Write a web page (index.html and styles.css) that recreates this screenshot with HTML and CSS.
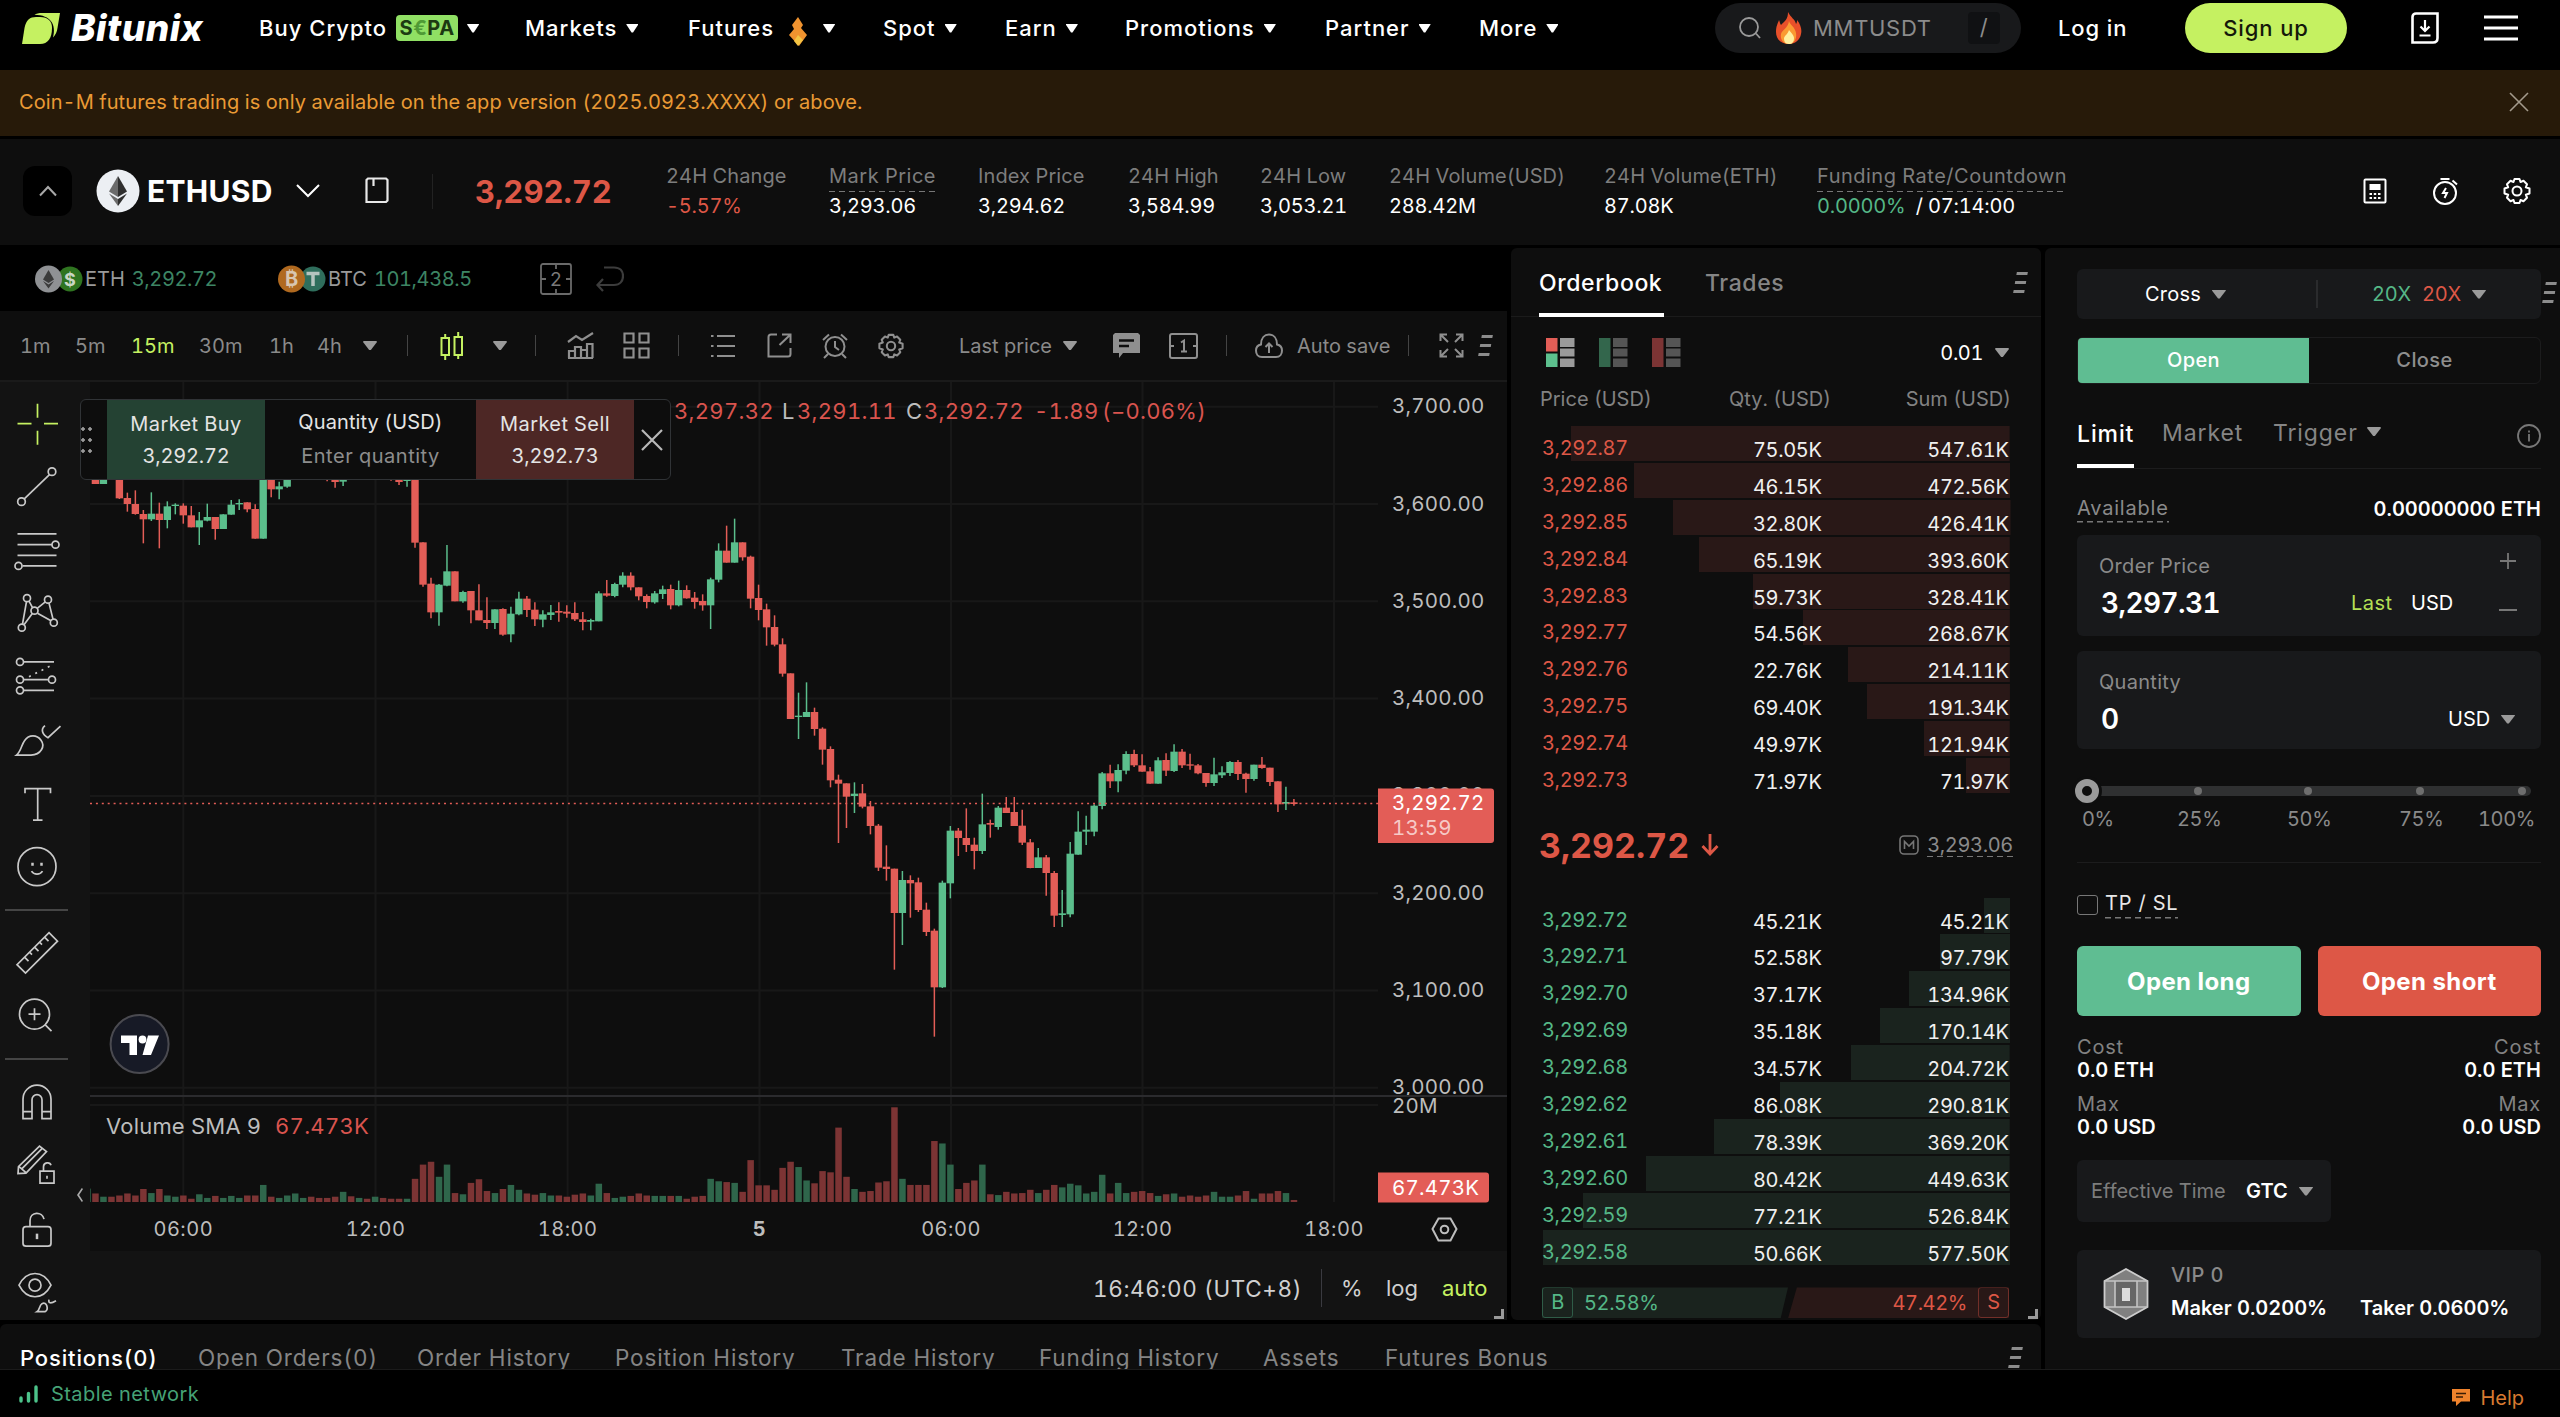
FILE: index.html
```html
<!DOCTYPE html>
<html lang="en">
<head>
    <meta charset="UTF-8">
    <meta name="viewport" content="width=device-width, initial-scale=1.0">
    <title>ETHUSD | Bitunix Futures</title>
    <link rel="stylesheet" href="styles.css">
</head>
<body>
    <header class="topbar">
        <a class="logo" href="#">
            <svg width="38" height="31" viewBox="0 0 38 31"><path d="M12.500 1.800C14 0.500 17 0 20 0H38L35.500 15C35 19 33.500 22 31 24.500C34.500 12 29 2 12.500 1.800Z" fill="#c5f161"/><path d="M0 31L2.500 15C4 7 8 4 14 4H18C26 4 30 8 30 15C30 25 26 31 18 31Z" fill="#c5f161"/></svg>
            <span>Bitunix</span>
        </a>
        <nav class="nav">
            <a>Buy Crypto <b class="sepa">S<i>€</i>PA</b><i class="caret"></i></a>
            <a>Markets<i class="caret"></i></a>
            <a>Futures<svg class="nav-flame" width="20" height="36" viewBox="0 0 20 36"><path d="M10 7L15 15L13 18L19 25L11 36L1 25L6 19L4 15Z" fill="#f0932f"/><path d="M10 25L15 30L10 36L6 31Z" fill="#f5c544"/></svg><i class="caret"></i></a>
            <a>Spot<i class="caret"></i></a>
            <a>Earn<i class="caret"></i></a>
            <a>Promotions<i class="caret"></i></a>
            <a>Partner<i class="caret"></i></a>
            <a>More<i class="caret"></i></a>
        </nav>
        <div class="search">
            <svg width="24" height="24" viewBox="0 0 24 24" fill="none" stroke="#9a9a9a" stroke-width="1.8"><circle cx="11" cy="11" r="9"/><path d="M18 17.500L22 22"/></svg>
            <svg class="search-flame" width="26" height="32" viewBox="0 0 26 32"><path d="M12 0C15 6 19 7 20 12C21 11 21 9 21 8C25 13 26 18 25 22C24 28 19 32 13 32C6 32 0 28 0 20C0 14 2 11 3 8C4 10 4 12 5 13C9 9 12 7 12 0Z" fill="#e8502a"/><path d="M13 9C14 13 19 15 20 21C21 27 18 32 13 32C7 32 4 27 5 22C6 18 12 16 13 9Z" fill="#fa9a32"/><path d="M13 18C15 21 18 23 18 26C18 30 16 32 13 32C9 32 8 29 8 26C9 23 12 22 13 18Z" fill="#fff0a0"/></svg>
            <span>MMTUSDT</span>
            <kbd>/</kbd>
        </div>
        <a class="login">Log in</a>
        <button class="signup">Sign up</button>
        <svg class="device" width="28" height="32" viewBox="0 0 28 32" fill="none" stroke="#fff" stroke-width="2.600"><path d="M5 1.500H26.500V26C26.500 29 25 30.500 22 30.500H1.500V5C1.500 3 3 1.500 5 1.500Z"/><path d="M14 8V18M9.500 14.500L14 19L18.500 14.500M8.500 23.500H19.500" stroke-width="2.200"/></svg>
        <svg class="burger" width="34" height="26" viewBox="0 0 34 26" stroke="#fff" stroke-width="3"><path d="M0 2H34M0 13H34M0 24H34"/></svg>
    </header>

    <div class="notice">
        <span>Coin-M futures trading is only available on the app version (2025.0923.XXXX) or above.</span>
        <svg width="20" height="20" viewBox="0 0 20 20" stroke="#a39a8c" stroke-width="1.600"><path d="M1 1L19 19M19 1L1 19"/></svg>
    </div>

    <section class="ticker">
        <button class="collapse"><svg width="18" height="12" viewBox="0 0 18 12" fill="none" stroke="#a8a8a8" stroke-width="2"><path d="M1 10.500L9 2L17 10.500"/></svg></button>
        <svg class="eth" width="44" height="44" viewBox="0 0 44 44"><circle cx="22" cy="22" r="21.500" fill="#eceff3"/><path d="M22 7L13 22.500L22 28Z" fill="#6b6b6b"/><path d="M22 7L31 22.500L22 28Z" fill="#2f2f2f"/><path d="M13 24.500L22 30V37Z" fill="#6b6b6b"/><path d="M31 24.500L22 30V37Z" fill="#2f2f2f"/></svg>
        <h1>ETHUSD</h1>
        <svg class="chev" width="24" height="14" viewBox="0 0 24 14" fill="none" stroke="#fff" stroke-width="2"><path d="M1 1L12 12L23 1"/></svg>
        <svg class="book" width="24" height="27" viewBox="0 0 24 27" fill="none" stroke="#e8e8e8" stroke-width="2.200"><path d="M3 1.500H21L22.500 3V23.500L21 25H1.500V3Z"/><path d="M8.500 1.500V9"/></svg>
        <span class="ticker-line"></span>
        <strong class="last">3,292.72</strong>
        <dl class="stats">
            <div><dt>24H Change</dt><dd class="down">-5.57%</dd></div>
            <div><dt class="dashed">Mark Price</dt><dd>3,293.06</dd></div>
            <div><dt>Index Price</dt><dd>3,294.62</dd></div>
            <div><dt>24H High</dt><dd>3,584.99</dd></div>
            <div><dt>24H Low</dt><dd>3,053.21</dd></div>
            <div><dt>24H Volume(USD)</dt><dd>288.42M</dd></div>
            <div><dt>24H Volume(ETH)</dt><dd>87.08K</dd></div>
            <div><dt class="dashed">Funding Rate/Countdown</dt><dd><span class="up">0.0000%</span> &nbsp;/ 07:14:00</dd></div>
        </dl>
        <div class="ticker-tools">
            <svg width="24" height="26" viewBox="0 0 24 26" fill="none" stroke="#fff" stroke-width="2"><rect x="1.500" y="1.500" width="21" height="23" rx="1"/><rect x="7.500" y="7" width="9" height="4" fill="#fff"/><path d="M6.500 16H9M10.800 16H13.200M15 16H17.500M6.500 20H9M10.800 20H13.200M15 20H17.500"/></svg>
            <svg width="26" height="28" viewBox="0 0 26 28" fill="none" stroke="#fff" stroke-width="2"><circle cx="13" cy="16" r="11"/><path d="M8.500 2H17.500M20.500 3.500L25 7.500M14 11L11 16H15L12.500 21"/></svg>
            <svg width="28" height="28" viewBox="0 0 28 28" fill="none" stroke="#fff" stroke-width="2"><path d="M11.500 2H16.500L17.500 5L20.500 3.800L24 7.300L22.800 10.300L26.500 11.500V16.500L22.800 17.700L24 20.700L20.500 24.200L17.500 23L16.500 26H11.500L10.500 23L7.500 24.200L4 20.700L5.200 17.700L1.500 16.500V11.500L5.200 10.300L4 7.300L7.500 3.800L10.500 5Z" stroke-linejoin="round"/><circle cx="14" cy="14" r="4.500"/></svg>
        </div>
    </section>

    <main class="workspace">
        <div class="left">
            <div class="market">
                <div class="chart-col">
                    <div class="pairs">
                        <div class="pair">
                            <svg width="50" height="28" viewBox="0 0 50 28"><circle cx="35" cy="14" r="12.500" fill="#2f7420"/><text x="35" y="20.500" text-anchor="middle" font-size="18" font-weight="700" fill="#c9d6c5">$</text><circle cx="13.500" cy="14" r="13.500" fill="#8f9194"/><path d="M13.500 5L8 14.500L13.500 18L19 14.500Z" fill="#3b3b3b"/><path d="M8 16L13.500 19.500L19 16L13.500 23.500Z" fill="#3b3b3b"/></svg>
                            <span>ETH</span><em>3,292.72</em>
                        </div>
                        <div class="pair">
                            <svg width="50" height="28" viewBox="0 0 50 28"><circle cx="35" cy="14" r="12.500" fill="#2f6e5c"/><path d="M28.500 8.500H41.500M35 8V21" stroke="#b5c4bf" stroke-width="3.500"/><circle cx="13.500" cy="14" r="13.500" fill="#b0691f"/><text x="13.500" y="21" text-anchor="middle" font-size="20" font-weight="700" fill="#d8c6b0">₿</text></svg>
                            <span>BTC</span><em>101,438.5</em>
                        </div>
                        <svg class="split2" width="32" height="32" viewBox="0 0 32 32" fill="none" stroke="#6a6a6a" stroke-width="1.800"><rect x="1" y="1" width="30" height="30" rx="2"/><path d="M1 16H6M26 16H31M16 1V6M16 26V31"/><text x="16" y="23" text-anchor="middle" font-size="19" fill="#7a7a7a" stroke="none">2</text></svg>
                        <svg width="28" height="26" viewBox="0 0 28 26" fill="none" stroke="#3c3c3c" stroke-width="2.200"><path d="M8 1.500H18C24 1.500 27 5 27 10C27 15 24 19 18 19H2M7 13L1.500 19L7 25"/></svg>
                    </div>

                    <div class="chart-tools">
                        <span>1m</span><span>5m</span><span class="on">15m</span><span>30m</span><span>1h</span><span>4h</span>
                        <i class="caret"></i><i class="sep"></i>
                        <svg width="24" height="28" viewBox="0 0 24 28" fill="none" stroke="#c5f161" stroke-width="2"><rect x="1.500" y="6" width="7.500" height="17"/><rect x="14.500" y="5" width="7.500" height="18"/><path d="M5.200 2V6M5.200 23V28M18.200 0V5M18.200 23V27"/></svg>
                        <i class="caret"></i><i class="sep"></i>
                        <svg width="27" height="27" viewBox="0 0 27 27" fill="none" stroke="#8f8f8f" stroke-width="2.200"><path d="M1 10L9 4L15 8L26 1M2 26V19H8V26M8 26V15H14V26M14 26V18H20V26M20 26V12H25.500V26M1 26H26"/></svg>
                        <svg width="27" height="27" viewBox="0 0 27 27" fill="none" stroke="#8f8f8f" stroke-width="2.200"><path d="M1.500 1.500H10.500V10.500H1.500ZM16.500 1.500H25.500V10.500H16.500ZM1.500 16.500H10.500V25.500H1.500ZM16.500 16.500H25.500V25.500H16.500Z"/></svg>
                        <i class="sep"></i>
                        <svg width="24" height="24" viewBox="0 0 24 24" stroke="#8f8f8f" stroke-width="2.200"><path d="M0 2H2.500M6 2H24M0 12H2.500M6 12H24M0 22H2.500M6 22H24"/></svg>
                        <svg width="25" height="25" viewBox="0 0 25 25" fill="none" stroke="#8f8f8f" stroke-width="2"><path d="M10 1.500H4C2.500 1.500 1.500 2.500 1.500 4V23.500H21C22.500 23.500 23.500 22.500 23.500 21V15M15 1.500H23.500V10M23 2L12.500 12"/></svg>
                        <svg width="26" height="26" viewBox="0 0 26 26" fill="none" stroke="#8f8f8f" stroke-width="2"><circle cx="13" cy="13.500" r="9.500"/><path d="M13 8V14L17 17M1 7L7 1.500M25 7L19 1.500M6 21L2 25M20 21L24 25"/></svg>
                        <svg width="26" height="26" viewBox="0 0 28 28" fill="none" stroke="#8f8f8f" stroke-width="2.200"><path d="M11.500 2H16.500L17.500 5L20.500 3.800L24 7.300L22.800 10.300L26.500 11.500V16.500L22.800 17.700L24 20.700L20.500 24.200L17.500 23L16.500 26H11.500L10.500 23L7.500 24.200L4 20.700L5.200 17.700L1.500 16.500V11.500L5.200 10.300L4 7.300L7.500 3.800L10.500 5Z" stroke-linejoin="round"/><circle cx="14" cy="14" r="4.500"/></svg>
                        <span>Last price</span><i class="caret"></i>
                        <svg width="27" height="25" viewBox="0 0 27 25"><path d="M2 0H25L27 2V20H10L6 25V20H0V2Z" fill="#8f8f8f"/><path d="M6 7.500H21M6 13H16" stroke="#0e0e0e" stroke-width="2.400"/></svg>
                        <svg width="29" height="26" viewBox="0 0 29 26" fill="none" stroke="#8f8f8f" stroke-width="2"><rect x="1" y="1" width="27" height="24" rx="2"/><path d="M1 13H5M24 13H28M12 9.500L15 7.500V18.500M12 18.500H18"/></svg>
                        <i class="sep"></i>
                        <svg width="28" height="26" viewBox="0 0 28 26" fill="none" stroke="#8f8f8f" stroke-width="2"><path d="M7 24C3 24 1 21 1 17.500C1 14 3.500 12 6 11.500C6 5 9.500 1.500 14 1.500S22 5 22 11.500C24.500 12 27 14 27 17.500C27 21 25 24 21 24ZM14 20V11M10.500 14L14 10.500L17.500 14"/></svg>
                        <span>Auto save</span><i class="sep"></i>
                        <svg width="25" height="25" viewBox="0 0 25 25" fill="none" stroke="#8f8f8f" stroke-width="2"><path d="M1.500 8V1.500H8M17 1.500H23.500V8M1.500 17V23.500H8M23.500 17V23.500H17M2 2L9 9M23 2L16 9M2 23L9 16M23 23L16 16"/></svg>
                        <i class="grip"></i>
                    </div>

                    <div class="chart-body">
                        <aside class="draw-tools">
                            <svg class="active" viewBox="0 0 56 56"><path d="M8.500 28H22.500M35 28H49M28.500 8V22M28.500 35V49"/></svg>
                            <svg viewBox="0 0 56 56"><circle cx="43" cy="13" r="3.800"/><circle cx="12.500" cy="43" r="3.800"/><path d="M40.500 16L15 40.500"/></svg>
                            <svg viewBox="0 0 56 56"><path d="M8.500 11.300H47.500M8.500 22H43M8.500 32.700H47.500M13.500 43.300H47.500"/><circle cx="46.500" cy="22" r="3.500"/><circle cx="9.500" cy="43.300" r="3.500"/></svg>
                            <svg viewBox="0 0 56 56"><path d="M13.500 38.500L17.500 16M20 15.500L23.500 22M28.500 22.500L36 16.500M40 17.500L44 33.500M28.500 27.500L42 35M23.500 27.500L15 39"/><circle cx="18" cy="12.500" r="3.500"/><circle cx="39" cy="14" r="3.500"/><circle cx="25.500" cy="25" r="3.500"/><circle cx="12.800" cy="42" r="3.500"/><circle cx="44.800" cy="37" r="3.500"/></svg>
                            <svg viewBox="0 0 56 56"><path d="M14.500 13.300H45M14.500 31H39.500M14.500 41.700H45"/><path d="M20 28L43 16.500" stroke-dasharray="2 5"/><circle cx="11" cy="13.300" r="3.500"/><circle cx="11" cy="31" r="3.500"/><circle cx="43" cy="31" r="3.500"/><circle cx="11" cy="41.700" r="3.500"/></svg>
                            <svg viewBox="0 0 56 56"><path d="M7.500 43.500C12 40 12.500 33 15.500 29C20 22.500 28 23 32 28.500C36.500 34.500 32 43 22 43.500ZM36 14C31.500 17.500 33 23 39 26L51.500 14.500"/></svg>
                            <svg viewBox="0 0 56 56"><path d="M16 17.500V13H41.500V17.500M28.700 13V44.500M24 44.500H33.500"/></svg>
                            <svg viewBox="0 0 56 56"><circle cx="28" cy="28" r="19"/><path d="M22.500 32.500C25 36.500 31 36.500 33.500 32.500"/><path d="M23.500 24V27M32.500 24V27" stroke-width="2.500"/></svg>
                            <hr>
                            <svg viewBox="0 0 56 56"><path d="M40 8L48.500 16.500L16.500 48.500L8 40ZM35.500 12.500L39.500 16.500M30.500 17.500L33 20M25.500 22.500L29.500 26.500M20.500 27.500L23 30M15.500 32.500L19.500 36.500"/></svg>
                            <svg viewBox="0 0 56 56"><circle cx="25.500" cy="25.500" r="15"/><path d="M19.500 25.500H31.500M25.500 19.500V31.500M36 36L42.500 42.500"/></svg>
                            <hr>
                            <svg viewBox="0 0 56 56"><path d="M14 44V24.500A14 14 0 0 1 42 24.500V44H33V25A5 5 0 0 0 23 25V44ZM14 37H23M33 37H42"/></svg>
                            <svg viewBox="0 0 56 56"><path d="M9 36L9.500 29L30.500 8.500L37.500 14L17 35.500ZM13 31L33 11M10 29L17 35"/><path d="M31 33.500H45V45.500H31ZM34.500 33.500V29C34.500 24.500 41 24 42 27.500M38 38V41"/></svg>
                            <svg viewBox="0 0 56 56"><rect x="14" y="25" width="28" height="19.500" rx="3"/><path d="M21 25V19C21 9.500 33.500 9.500 35 17.500"/><path d="M28 32V37.500" stroke-width="2.500"/></svg>
                            <svg viewBox="0 0 56 56"><path d="M10 20.500C18 5 34 5 42 20.500C34 36 18 36 10 20.500Z"/><circle cx="26" cy="20.500" r="6"/><path d="M28 47C31 45 30 41 33 39C38 36.500 40 45 36 47ZM40 35C39 39 42 39 47 36"/></svg>
                        </aside>
                        <div class="chart-pane">
                            <svg id="chart" width="1417" height="869" viewBox="0 0 1417 869"></svg>
                            <div class="chart-foot">
                                <span class="clock">16:46:00 (UTC+8)</span><i></i><span>%</span><span>log</span><span class="on">auto</span>
                            </div>
                            <i class="pane-fold"></i>
                            <div class="quick-order">
                                <span class="dots"></span>
                                <div class="buy"><p>Market Buy</p><p>3,292.72</p></div>
                                <div class="qty"><p>Quantity (USD)</p><p>Enter quantity</p></div>
                                <div class="sell"><p>Market Sell</p><p>3,292.73</p></div>
                                <svg width="22" height="22" viewBox="0 0 22 22" stroke="#b8b8b8" stroke-width="2.200"><path d="M1 1L21 21M21 1L1 21"/></svg>
                            </div>
                        </div>
                        <i class="resize"></i>
                    </div>
                </div>

                <section class="panel orderbook">
                    <div class="ob-tabs"><a class="on">Orderbook</a><a>Trades</a><i class="grip"></i></div>
                    <div class="ob-modes">
                        <svg width="29" height="29" viewBox="0 0 29 29"><path d="M0 0H11.500V13.500H0Z" fill="#e35e57"/><path d="M0 15.500H11.500V29H0Z" fill="#5dc08e"/><path d="M14 0H28.500V9H14ZM14 10.500H28.500V18.500H14ZM14 20.500H28.500V29H14Z" fill="#9a9a9a"/></svg>
                        <svg width="29" height="29" viewBox="0 0 29 29"><path d="M0 0H11.500V29H0Z" fill="#33664c"/><path d="M14 0H28.500V9H14ZM14 10.500H28.500V18.500H14ZM14 20.500H28.500V29H14Z" fill="#555"/></svg>
                        <svg width="29" height="29" viewBox="0 0 29 29"><path d="M0 0H11.500V29H0Z" fill="#7c3434"/><path d="M14 0H28.500V9H14ZM14 10.500H28.500V18.500H14ZM14 20.500H28.500V29H14Z" fill="#555"/></svg>
                        <span>0.01</span><i class="caret"></i>
                    </div>
                    <div class="ob-head"><span>Price (USD)</span><span>Qty. (USD)</span><span>Sum (USD)</span></div>
                    <div class="ob-rows asks" id="asks"></div>
                    <div class="ob-mid">
                        <strong>3,292.72</strong>
                        <svg width="18" height="22" viewBox="0 0 18 22" fill="none" stroke="#dd5746" stroke-width="2.800"><path d="M9 0V20M1.500 12L9 20L16.500 12"/></svg>
                        <svg class="mark" width="20" height="20" viewBox="0 0 20 20" fill="none" stroke="#757575" stroke-width="1.600"><rect x="1" y="1" width="18" height="18" rx="4"/><path d="M5.500 14V6.500L10 11L14.500 6.500V14"/></svg>
                        <span class="dashed">3,293.06</span>
                    </div>
                    <div class="ob-rows bids" id="bids"></div>
                    <div class="ob-ratio">
                        <div class="b"><b>B</b>52.58%</div>
                        <div class="s">47.42%<b>S</b></div>
                    </div>
                    <i class="resize"></i>
                </section>
            </div>

            <nav class="panel positions">
                <a class="on">Positions(0)</a><a>Open Orders(0)</a><a>Order History</a><a>Position History</a><a>Trade History</a><a>Funding History</a><a>Assets</a><a>Futures Bonus</a>
                <i class="grip"></i>
            </nav>
        </div>

        <aside class="panel trade">
            <div class="margin-mode">
                <div>Cross<i class="caret"></i></div>
                <div><span class="up">20X</span><span class="down">20X</span><i class="caret"></i></div>
                <i class="grip"></i>
            </div>
            <div class="side"><span class="on">Open</span><span>Close</span></div>
            <div class="order-type">
                <a class="on">Limit</a><a>Market</a><a>Trigger</a><i class="caret"></i>
                <svg width="24" height="24" viewBox="0 0 24 24" fill="none" stroke="#777" stroke-width="1.800"><circle cx="12" cy="12" r="11"/><path d="M12 10V17.500M12 6.500V8.500"/></svg>
            </div>
            <div class="avail"><span class="dashed">Available</span><b>0.00000000 ETH</b></div>
            <div class="field price">
                <label>Order Price</label>
                <b>3,297.31</b><em>Last</em><span>USD</span>
                <svg width="18" height="68" viewBox="0 0 18 68" stroke="#777" stroke-width="1.800"><path d="M1 9H17M9 1V17M0 58H18"/></svg>
            </div>
            <div class="field amount">
                <label>Quantity</label>
                <b>0</b><span>USD</span><i class="caret"></i>
            </div>
            <div class="slider"><i></i><i></i><i></i><i></i><b></b></div>
            <div class="slider-labels"><span>0%</span><span>25%</span><span>50%</span><span>75%</span><span>100%</span></div>
            <div class="tpsl"><i></i><span class="dashed">TP / SL</span></div>
            <div class="actions"><button class="long">Open long</button><button class="short">Open short</button></div>
            <div class="cost">
                <div><span>Cost</span><b>0.0 ETH</b><span>Max</span><b>0.0 USD</b></div>
                <div><span>Cost</span><b>0.0 ETH</b><span>Max</span><b>0.0 USD</b></div>
            </div>
            <div class="tif"><span>Effective Time</span><b>GTC</b><i class="caret"></i></div>
            <div class="vip">
                <svg width="46" height="52" viewBox="0 0 46 52"><path d="M23 1L44.500 13V39L23 51L1.500 39V13Z" fill="#808080" stroke="#ccc" stroke-width="1.800"/><path d="M12 13H34V39H12Z" fill="#666"/><path d="M1.500 13H44.500M1.500 39H44.500M12 13V39M34 13V39" fill="none" stroke="#c4c4c4" stroke-width="1.600"/><path d="M19 20H27V33H19Z" fill="#dcdcdc"/></svg>
                <div><p>VIP 0</p><b>Maker 0.0200%</b><b>Taker 0.0600%</b></div>
            </div>
        </aside>
    </main>

    <footer class="status">
        <svg width="19" height="18" viewBox="0 0 19 18" stroke="#4cc38a" stroke-width="3.400" stroke-linecap="round"><path d="M2 13V16M9.500 8.500V16M17 2V16"/></svg>
        <span>Stable network</span>
        <a class="help"><svg width="18" height="17" viewBox="0 0 18 17"><path d="M0 0H18V12.500H9L4 17V12.500H0Z" fill="#f0832c"/><path d="M4 4.500H14M4 8H11" stroke="#3a1c05" stroke-width="1.500"/></svg>Help</a>
    </footer>

    <script src="script.js"></script>
</body>
</html>
```
FILE: styles.css
```css
* {
    box-sizing: border-box;
}
body {
    margin: 0;
    height: 1417px;
    overflow: hidden;
    background-color: #000;
    color: #fff;
    font-family: Inter, "Liberation Sans", sans-serif;
    font-size: 20px;
    font-variant-numeric: tabular-nums;
    display: flex;
    flex-direction: column;
}
p, dl, dd, h1 {
    margin: 0;
}
i, em {
    font-style: normal;
}
a {
    color: inherit;
    text-decoration: none;
}
svg {
    display: block;
    flex: none;
}
button {
    font-family: inherit;
    border: none;
    padding: 0;
}
.up {
    color: #55b787;
}
.down {
    color: #dd5746;
}
.caret {
    display: inline-block;
    width: 14px;
    height: 9px;
    flex: none;
    background-color: #9a9a9a;
    clip-path: polygon(4% 0, 96% 0, 100% 12%, 56% 100%, 44% 100%, 0 12%);
}
.dashed {
    background: repeating-linear-gradient(90deg, #777 0 6px, transparent 6px 10px) left bottom / 100% 1.5px no-repeat;
}
.grip {
    width: 11px;
    height: 21px;
    transform: skewX(-10deg);
    background: linear-gradient(#8c8c8c 0 3px, transparent 3px 9px, #8c8c8c 9px 12px, transparent 12px 18px, #8c8c8c 18px);
}
.resize {
    position: absolute;
    right: 3px;
    bottom: 1px;
    width: 10px;
    height: 10px;
    border-right: 3px solid #9a9a9a;
    border-bottom: 3px solid #9a9a9a;
}
.panel {
    background-color: #0e0e0e;
    border-radius: 6px;
}

/* header */
.topbar {
    height: 70px;
    flex: none;
    padding: 3px 42px 0 22px;
    display: flex;
    align-items: flex-start;
}
.topbar > * {
    height: 50px;
}
.logo {
    width: 237px;
    display: flex;
    align-items: center;
    gap: 11px;
}
.logo span {
    font-size: 37px;
    font-weight: 800;
    font-style: italic;
    letter-spacing: 0.5px;
    margin-top: -2px;
}
.nav {
    width: 1456px;
    display: grid;
    grid-template-columns: 266px 163px 195px 122px 120px 200px 154px auto;
    align-items: center;
    font-size: 22px;
    font-weight: 500;
    letter-spacing: 1px;
}
.nav a {
    display: flex;
    align-items: center;
    gap: 9px;
}
.nav .caret {
    background-color: #fff;
    width: 12px;
}
.nav-flame {
    margin: 0 6px 0 5px;
}
.sepa {
    width: 62px;
    height: 26px;
    border-radius: 4px;
    background-color: #90e064;
    color: #1c3a12;
    font-size: 20px;
    line-height: 26px;
    letter-spacing: 0.5px;
    text-align: center;
}
.sepa i {
    color: #4f9a35;
}
.search {
    width: 306px;
    border-radius: 25px;
    background-color: #18191b;
    display: flex;
    align-items: center;
    padding: 0 21px 0 23px;
    color: #8c8c8c;
    font-size: 22px;
    letter-spacing: 0.7px;
}
.search-flame {
    margin: 0 11px 0 14px;
}
.search kbd {
    margin-left: auto;
    width: 32px;
    height: 32px;
    border-radius: 4px;
    background-color: #101113;
    font-family: inherit;
    font-size: 22px;
    line-height: 31px;
    text-align: center;
}
.login {
    width: 164px;
    padding-left: 37px;
    line-height: 50px;
    font-size: 22px;
    font-weight: 500;
    letter-spacing: 0.9px;
}
.signup {
    width: 162px;
    border-radius: 25px;
    background-color: #c5f161;
    color: #14190a;
    font-size: 22px;
    font-weight: 500;
    letter-spacing: 0.9px;
}
.device {
    margin-left: 64px;
}
.burger {
    margin-left: 45px;
}

.notice {
    height: 66px;
    margin-bottom: 3px;
    flex: none;
    padding: 0 31px 2px 19px;
    background-color: #271a09;
    color: #ea9a35;
    letter-spacing: 0.08px;
    display: flex;
    align-items: center;
    justify-content: space-between;
}

/* ticker bar */
.ticker {
    height: 106px;
    flex: none;
    padding: 0 29px 2px 23px;
    background-color: #0e0e0e;
    display: flex;
    align-items: center;
}
.collapse {
    width: 49px;
    height: 50px;
    margin-right: 24px;
    border-radius: 12px;
    background-color: #000;
    display: grid;
    place-items: center;
}
.ticker h1 {
    width: 149px;
    margin-left: 7px;
    font-size: 30px;
    font-weight: 700;
    letter-spacing: 0.3px;
}
.chev {
    width: 69px;
    padding-right: 45px;
}
.book {
    margin-top: -1px;
}
.ticker-line {
    width: 1px;
    height: 35px;
    margin: 0 42px 0 43px;
    background-color: #222;
}
.last {
    width: 191px;
    font-size: 31px;
    font-weight: 700;
    color: #dd5746;
}
.stats {
    display: grid;
    grid-template-columns: 163px 149px 150px 132px 129px 215px 213px auto;
    font-size: 20px;
    line-height: 24px;
    letter-spacing: 0.1px;
}
.stats dt {
    display: table;
    height: 28px;
    margin-bottom: 2px;
    color: #7d7d7d;
}
.stats dd {
    letter-spacing: -0.2px;
}
.stats .dashed {
    letter-spacing: 0.5px;
}
.ticker-tools {
    margin-left: auto;
    display: flex;
    align-items: center;
    gap: 45px;
}

/* workspace */
.workspace {
    height: 1124px;
    flex: none;
    display: grid;
    grid-template-columns: 2041px 515px;
    column-gap: 4px;
}
.market {
    height: 1075px;
    display: grid;
    grid-template-columns: 1507px 530px;
    column-gap: 4px;
}
.pairs {
    height: 66px;
    padding: 2px 0 0 35px;
    display: flex;
    align-items: center;
    color: #999;
}
.pair {
    width: 243px;
    display: flex;
    align-items: center;
}
.pair em {
    margin-left: 7px;
    letter-spacing: -0.4px;
    color: #3d8564;
}
.split2 {
    margin: 0 24px 0 19px;
}
.chart-tools {
    height: 71px;
    padding-left: 20px;
    background-color: #0e0e0e;
    border-bottom: 2px solid #1a1a1a;
    color: #8a8a8a;
    display: grid;
    grid-template-columns: 55px 56px 68px 70px 48px 46px 44px 33px 53px 42px 32px 56px 55px 33px 56px 55px 56px 81px 104px 50px 56px 57px 29px 42px 111px 31px 41px 11px;
    align-items: center;
}
.on {
    color: #c5f161;
}
.sep {
    width: 1px;
    height: 21px;
    background-color: #444;
}
.chart-body {
    position: relative;
    height: 938px;
    display: flex;
    background-color: #0e0e0e;
}
.draw-tools {
    width: 90px;
    padding: 10px 0 0 9px;
    background-color: #131313;
}
.draw-tools svg {
    width: 56px;
    height: 63.3px;
    fill: none;
    stroke: #c9c9c9;
    stroke-width: 1.7;
}
.draw-tools svg.active {
    stroke: #c5f161;
}
.draw-tools hr {
    width: 63px;
    height: 2px;
    margin: 10.5px 0 10.5px -4px;
    border: none;
    background-color: #454545;
}
.chart-pane {
    position: relative;
    width: 1417px;
}
.chart-foot {
    height: 69px;
    background-color: #131313;
    color: #d0d0d0;
    font-size: 22px;
    display: grid;
    grid-template-columns: 228px 20px 45px 56px 60px;
    justify-content: end;
    align-items: center;
    padding: 5px 5px 0 0;
}
.chart-foot i {
    width: 1px;
    height: 38px;
    background-color: #3a3a40;
}
.clock {
    font-size: 22.5px;
    letter-spacing: 0.6px;
}
.pane-fold {
    position: absolute;
    left: -13px;
    top: 806px;
    width: 6px;
    height: 14px;
    clip-path: polygon(0 50%, 80% 0, 100% 8%, 35% 50%, 100% 92%, 80% 100%);
    background-color: #aaa;
}
.quick-order {
    position: absolute;
    left: -10px;
    top: 17px;
    width: 591px;
    height: 81px;
    border: 1.5px solid #303336;
    border-radius: 6px;
    background-color: #0d0d0d;
    display: grid;
    grid-template-columns: 26px 158px 211px 158px auto;
    align-items: stretch;
    text-align: center;
    line-height: 32px;
    letter-spacing: 0.4px;
    color: #e4e4e4;
}
.quick-order > div {
    padding-top: 8px;
}
.quick-order > .qty {
    padding-top: 6px;
}
.quick-order > svg {
    place-self: center;
}
.dots {
    width: 12px;
    height: 26px;
    align-self: center;
    background: radial-gradient(circle at 2px 2px, #999 1.5px, transparent 2px) 0 0 / 7px 11px;
}
.buy {
    background-color: #244233;
}
.sell {
    background-color: #4d2725;
}
.buy p + p,
.sell p + p {
    letter-spacing: -0.2px;
}
.qty p {
    letter-spacing: 0.1px;
}
.qty p + p {
    margin-top: 2px;
    letter-spacing: 0.5px;
    color: #8d8d8d;
}
#chart text {
    font-size: 20px;
    fill: #bdbdbd;
    letter-spacing: 0.5px;
}
#chart .axis {
    font-size: 20.5px;
    letter-spacing: 0.2px;
}
#chart .tag {
    fill: #fff;
}
#chart .dim {
    fill: #f6c9c6;
}
#chart .legend {
    font-size: 22px;
    letter-spacing: 0.2px;
}
#chart .red {
    fill: #d9544e;
    letter-spacing: 0.3px;
}

/* order book */
.orderbook {
    position: relative;
    margin-top: 3px;
    height: 1072px;
}
.ob-tabs {
    height: 69px;
    padding-left: 28px;
    border-bottom: 1.5px solid #1b1b1b;
    display: grid;
    grid-template-columns: 166px 310px auto;
    align-items: center;
    font-size: 23px;
    font-weight: 500;
    letter-spacing: 0.6px;
    color: #858585;
}
.ob-tabs .on {
    justify-self: start;
    width: 125px;
    height: 69px;
    line-height: 70px;
    color: #fff;
    border-bottom: 4px solid #fff;
}
.ob-modes {
    height: 71px;
    padding: 0 32px 0 35px;
    display: flex;
    align-items: center;
    gap: 24px;
}
.ob-modes span {
    margin-left: auto;
    margin-right: -12px;
    letter-spacing: -0.4px;
}
.ob-head {
    height: 38px;
    padding: 0 30px 0 29px;
    display: grid;
    grid-template-columns: 150px 141px 180px;
    line-height: 23px;
    color: #828282;
}
.ob-head span + span,
.row span + span {
    text-align: right;
}
.row {
    height: 36.9px;
    padding: 0 31px;
    display: grid;
    grid-template-columns: 141px 138.5px 187px;
    line-height: 45px;
    letter-spacing: -0.35px;
    background: linear-gradient(var(--shade), var(--shade)) right 31px top / var(--depth) 35px no-repeat;
}
.row span + span {
    line-height: 48px;
    color: #f0f0f0;
}
.row span:first-child {
    color: var(--tone);
}
.asks {
    --shade: #291817;
    --tone: #dd5746;
    height: 369px;
}
.bids {
    --shade: #1a231e;
    --tone: #55b787;
}
.ob-mid {
    height: 102.5px;
    padding: 0 28px 2px;
    display: flex;
    align-items: center;
    letter-spacing: -0.35px;
    color: #8a8a8a;
}
.ob-mid strong {
    width: 162px;
    font-size: 34px;
    letter-spacing: 0;
    color: #dd5746;
}
.ob-mid .mark {
    margin: 0 8px 0 auto;
}
.ob-ratio {
    margin: 21px 32px 0 31px;
    height: 31px;
    display: flex;
    line-height: 32px;
    letter-spacing: -0.4px;
}
.ob-ratio div {
    display: flex;
    gap: 11px;
}
.ob-ratio b {
    width: 31px;
    border: 1.5px solid;
    border-radius: 3px;
    font-weight: 400;
    line-height: 29px;
    text-align: center;
}
.ob-ratio .b {
    width: 246px;
    background-color: #1a231e;
    color: #55b787;
    clip-path: polygon(0 0, 100% 0, 97% 100%, 0 100%);
}
.ob-ratio .s {
    flex: 1;
    justify-content: flex-end;
    background-color: #291817;
    color: #dd5746;
    clip-path: polygon(4% 0, 100% 0, 100% 100%, 0 100%);
}
.ob-ratio .b b {
    border-color: #2f5c47;
}
.ob-ratio .s b {
    border-color: #722f29;
}

.positions {
    height: 45px;
    margin-top: 4px;
    padding-left: 20px;
    overflow: hidden;
    border-radius: 6px 6px 0 0;
    display: grid;
    grid-template-columns: 178px 219px 198px 226px 198px 224px 122px 625px auto;
    font-size: 22.5px;
    line-height: 68px;
    letter-spacing: 0.85px;
    color: #858585;
}
.positions .on {
    font-size: 22px;
    color: #fff;
    font-weight: 500;
}
.positions .grip {
    margin-top: 23px;
}

/* trade form */
.trade {
    margin-top: 3px;
    padding: 21px 19px 0 32px;
    border-radius: 6px 0 0 0;
}
.margin-mode {
    position: relative;
    height: 50px;
    border-radius: 6px;
    background-color: #18191b;
    display: flex;
    align-items: center;
}
.margin-mode div {
    flex: 1;
    height: 28px;
    display: flex;
    align-items: center;
    gap: 11px;
    padding-left: 68px;
    letter-spacing: 0.2px;
}
.margin-mode div + div {
    flex: none;
    width: 225px;
    padding-left: 54px;
    letter-spacing: -0.2px;
    border-left: 2px solid #2a2b2d;
}
.margin-mode .grip {
    position: absolute;
    right: -14px;
    top: 13px;
}
.side {
    height: 47px;
    margin-top: 18px;
    border: 1.5px solid #1c1c1d;
    border-radius: 6px;
    display: grid;
    grid-template-columns: 1fr 1fr;
    line-height: 45px;
    letter-spacing: 0.4px;
    text-align: center;
    font-weight: 500;
    color: #8e8e8e;
}
.side .on {
    border-radius: 4px 0 0 4px;
    background-color: #5fbd92;
    color: #fff;
}
.order-type {
    height: 85px;
    border-bottom: 1.5px solid #1c1c1d;
    display: grid;
    grid-template-columns: 85px 111px 94px 150px auto;
    align-items: center;
    padding-top: 14px;
    font-size: 23px;
    letter-spacing: 0.9px;
    color: #858585;
}
.order-type .on {
    width: 57px;
    height: 70px;
    line-height: 72px;
    border-bottom: 4px solid #fff;
    color: #fff;
    font-weight: 500;
}
.order-type .caret {
    margin-bottom: 3px;
}
.order-type svg {
    margin-top: 5px;
}
.avail {
    height: 66px;
    display: flex;
    align-items: center;
    justify-content: space-between;
    padding-top: 14px;
    color: #8a8a8a;
}
.avail b,
.cost b {
    color: #fff;
    font-weight: 600;
}
.avail .dashed {
    height: 27px;
    letter-spacing: 0.8px;
}
.field {
    position: relative;
    height: 101px;
    margin-bottom: 15px;
    padding: 18px 26px 0 22px;
    border-radius: 6px;
    background-color: #18191b;
    display: grid;
    align-content: start;
    align-items: center;
}
.field label {
    grid-column: 1 / -1;
    line-height: 26px;
    letter-spacing: 0.3px;
    color: #8a8a8a;
}
.field b {
    padding-left: 2px;
    font-size: 28px;
    font-weight: 600;
    line-height: 48px;
    letter-spacing: -0.6px;
}
.field em {
    color: #b3df55;
    letter-spacing: 0.5px;
}
.price {
    grid-template-columns: 252px 60px auto;
}
.price svg {
    position: absolute;
    right: 24px;
    top: 17px;
}
.amount {
    height: 98px;
    grid-template-columns: 349px 53px auto;
}
.slider {
    position: relative;
    width: 454px;
    height: 10px;
    margin-top: 37px;
    border-radius: 5px;
    background-color: #2f3031;
    display: grid;
    grid-template-columns: 110px 112px 102px 8px;
    padding-left: 117px;
    align-items: center;
}
.slider i {
    width: 8px;
    height: 8px;
    border-radius: 50%;
    background-color: #6e6e6e;
}
.slider b {
    position: absolute;
    left: -2px;
    top: -7px;
    width: 24px;
    height: 24px;
    border: 7px solid #9a9a9a;
    border-radius: 50%;
    background-color: #0e0e0e;
    box-shadow: 0 0 0 3px #0e0e0e;
}
.slider-labels {
    height: 67px;
    border-bottom: 1.5px solid #1c1c1d;
    display: grid;
    grid-template-columns: 95px 110px 112px 79px auto;
    padding: 11px 0 0 5px;
    letter-spacing: -0.4px;
    color: #8a8a8a;
}
.tpsl {
    height: 83px;
    display: flex;
    align-items: center;
    gap: 8px;
    color: #e8e8e8;
}
.tpsl i {
    width: 21px;
    height: 20px;
    border: 1.5px solid #777;
    border-radius: 3px;
}
.tpsl .dashed {
    height: 28px;
    letter-spacing: 0.8px;
    margin-left: -1px;
}
.actions {
    display: grid;
    grid-template-columns: 1fr 1fr;
    gap: 17px;
}
.actions button {
    height: 70px;
    border-radius: 6px;
    color: #fff;
    font-size: 24px;
    font-weight: 700;
    letter-spacing: 0.4px;
}
.long {
    background-color: #5fbd92;
}
.short {
    background-color: #dd5746;
}
.cost {
    height: 144px;
    padding-top: 20px;
    display: flex;
    justify-content: space-between;
    line-height: 23px;
    color: #828282;
}
.cost span {
    letter-spacing: 0.8px;
}
.cost div {
    display: flex;
    flex-direction: column;
}
.cost div + div {
    align-items: flex-end;
}
.cost b {
    margin-bottom: 11px;
}
.tif {
    width: 254px;
    height: 62px;
    padding-left: 14px;
    border-radius: 6px;
    background-color: #18191b;
    display: grid;
    grid-template-columns: 155px 53px auto;
    align-items: center;
    color: #7d7d7d;
}
.tif b {
    color: #fff;
    font-weight: 600;
}
.vip {
    height: 88px;
    margin-top: 28px;
    padding-left: 26px;
    border-radius: 6px;
    background-color: #18191b;
    display: flex;
    align-items: center;
    gap: 22px;
}
.vip div {
    display: grid;
    grid-template-columns: 189px auto;
    line-height: 33px;
    padding-bottom: 5px;
}
.vip p {
    grid-column: 1 / -1;
    color: #8a8a8a;
    font-weight: 500;
    letter-spacing: 0.4px;
}
.vip b {
    font-weight: 600;
}

.status {
    height: 48px;
    flex: none;
    padding: 0 36px 0 19px;
    border-top: 1.5px solid #1b1b1b;
    display: flex;
    align-items: center;
    gap: 13px;
    color: #46a377;
    letter-spacing: 0.45px;
}
.status .help {
    margin-left: auto;
    padding-top: 8px;
    display: flex;
    align-items: center;
    gap: 10px;
    letter-spacing: 0;
    color: #d87a30;
}
```
FILE: script.js
```js
// 15m candles: [up, body top, body bottom, high, low, volume]
// three units per pixel, measured down from the top of the toolbar
const OFFSET = 72;
const candles = [
    [1,380,430,380,430,33],[0,400,522,390,522,21],[1,500,522,480,522,13],[0,480,490,470,498,13],[0,480,565,480,567,16],[0,564,582,548,605,21],
    [0,582,612,541,614,16],[0,612,628,600,700,32],[1,611,628,547,633,22],[0,611,630,578,715,32],[1,589,630,574,655,16],[1,584,588,580,613,13],
    [0,587,616,580,641,16],[0,616,652,588,652,8],[1,631,652,606,705,19],[1,621,632,581,634,10],[0,621,657,621,689,15],[1,613,657,613,657,10],
    [1,584,614,570,614,15],[1,579,583,568,600,10],[0,577,598,577,607,16],[0,597,686,583,686,16],[1,500,686,490,686,42],[0,500,538,490,562,13],
    [1,529,538,515,568,10],[1,480,530,480,533,16],[1,440,480,430,490,21],[1,430,440,420,450,10],[0,430,440,420,450,13],[0,440,480,430,490,10],
    [0,480,500,470,514,10],[0,490,516,480,533,13],[1,480,515,480,528,25],[0,450,480,440,490,14],[1,440,460,430,470,10],[0,440,460,430,470,8],
    [1,440,460,430,470,13],[0,440,480,430,490,10],[0,460,490,460,512,8],[0,490,516,480,525,8],[1,490,513,480,530,8],
    [0,500,698,490,713,57],[0,697,824,697,830,92],[0,821,907,803,925,99],[1,824,907,822,947,62],[1,784,827,705,829,92],[0,784,874,784,874,22],
    [1,846,874,842,878,19],[0,843,901,843,940,47],[0,901,931,823,931,56],[0,930,939,862,957,27],[1,898,939,898,957,22],[0,897,974,895,977,32],
    [1,911,973,890,997,42],[1,866,913,845,916,30],[0,866,900,858,921,21],[0,899,928,877,948,18],[1,913,929,901,952,22],[1,907,915,885,930,16],
    [0,903,908,877,935,16],[0,905,911,886,923,13],[0,909,928,877,933,18],[0,928,936,906,961,21],[1,930,935,926,961,16],[1,850,934,844,934,45],
    [0,850,857,810,860,22],[1,822,858,818,862,10],[1,797,824,787,832,13],[0,797,832,787,841,15],[0,832,859,832,871,21],[0,858,876,853,895,16],
    [1,850,877,843,881,15],[1,838,852,827,867,15],[0,837,886,824,898,15],[1,840,886,812,889,15],[0,840,865,826,866,8],[0,863,876,846,896,13],
    [0,873,886,853,902,15],[1,808,886,803,957,57],[1,722,809,700,817,51],[0,722,758,647,758,49],[1,697,758,626,758,47],[0,697,742,697,752,25],
    [0,740,866,737,895,103],[0,864,900,824,931,41],[0,898,952,881,1007,41],[0,951,1004,916,1009,30],[0,1003,1091,985,1100,84],[0,1090,1227,1090,1227,99],
    [1,1217,1221,1148,1287,86],[1,1206,1221,1117,1221,53],[0,1206,1257,1193,1277,46],[0,1256,1319,1252,1364,76],[0,1317,1411,1309,1432,73],[0,1409,1421,1394,1599,183],
    [0,1420,1460,1420,1554,62],[1,1451,1458,1417,1509,32],[0,1450,1490,1422,1495,25],[0,1489,1548,1473,1573,27],[0,1547,1673,1542,1683,48],[0,1670,1677,1606,1712,51],
    [0,1676,1809,1676,1979,233],[1,1710,1809,1683,1905,57],[0,1710,1720,1696,1823,42],[0,1717,1800,1703,1806,42],[0,1799,1866,1778,1878,42],[0,1862,2032,1856,2180,150],
    [1,1718,2032,1712,2034,144],[1,1562,1720,1548,1765,92],[0,1562,1584,1554,1638,32],[0,1584,1605,1495,1626,47],[0,1604,1623,1583,1678,53],[1,1543,1623,1451,1632,92],
    [0,1539,1544,1529,1583,19],[1,1493,1551,1488,1559,17],[0,1493,1509,1461,1509,25],[0,1506,1548,1461,1548,21],[0,1547,1598,1499,1605,22],[0,1597,1674,1587,1675,30],
    [1,1642,1674,1614,1674,22],[0,1642,1689,1635,1757,30],[0,1689,1817,1683,1851,42],[1,1810,1815,1740,1851,36],[1,1631,1813,1596,1822,45],[1,1565,1634,1504,1634,41],
    [1,1559,1565,1517,1605,21],[1,1487,1565,1483,1579,25],[1,1390,1488,1386,1498,67],[0,1390,1414,1364,1434,21],[1,1380,1414,1363,1447,47],[1,1332,1382,1324,1393,22],
    [0,1332,1366,1319,1371,25],[0,1366,1385,1333,1385,27],[0,1384,1421,1371,1421,22],[1,1351,1421,1342,1421,15],[0,1350,1382,1330,1398,19],[1,1325,1383,1303,1386,21],
    [0,1325,1366,1317,1374,13],[0,1363,1367,1331,1379,16],[0,1366,1390,1362,1393,13],[0,1389,1419,1389,1430,16],[1,1393,1419,1343,1428,25],[1,1387,1396,1369,1404,13],
    [1,1356,1389,1353,1398,13],[0,1356,1392,1350,1410,16],[0,1391,1407,1388,1448,27],[1,1364,1407,1364,1412,8],[0,1364,1374,1341,1376,21],[0,1373,1416,1373,1428,21],
    [0,1414,1483,1414,1506,27],[1,1476,1481,1430,1500,22],[0,1477,1482,1467,1487,5]
];

const asks = [
    ['3,292.87', '75.05K', '547.61K', 438.6], ['3,292.86', '46.15K', '472.56K', 376.4],
    ['3,292.85', '32.80K', '426.41K', 337.5], ['3,292.84', '65.19K', '393.60K', 310.7],
    ['3,292.83', '59.73K', '328.41K', 256.8], ['3,292.77', '54.56K', '268.67K', 206.8],
    ['3,292.76', '22.76K', '214.11K', 161.8], ['3,292.75', '69.40K', '191.34K', 142.9],
    ['3,292.74', '49.97K', '121.94K', 85.7], ['3,292.73', '71.97K', '71.97K', 43.9]
];
const bids = [
    ['3,292.72', '45.21K', '45.21K', 26.4], ['3,292.71', '52.58K', '97.79K', 70.4],
    ['3,292.70', '37.17K', '134.96K', 101], ['3,292.69', '35.18K', '170.14K', 130],
    ['3,292.68', '34.57K', '204.72K', 158.6], ['3,292.62', '86.08K', '290.81K', 230.4],
    ['3,292.61', '78.39K', '369.20K', 295.7], ['3,292.60', '80.42K', '449.63K', 363.6],
    ['3,292.59', '77.21K', '526.84K', 427], ['3,292.58', '50.66K', '577.50K', 467]
];

function renderBook(id, rows) {
    document.getElementById(id).innerHTML = rows.map(r =>
        `<div class="row" style="--depth:${r[3]}px"><span>${r[0]}</span><span>${r[1]}</span><span>${r[2]}</span></div>`
    ).join('');
}

function renderChart() {
    const RIGHT = 1288;
    const BASE = 820;
    let out = '';

    // grid and axes
    const times = [[93.3, '06:00'], [285.5, '12:00'], [477.6, '18:00'], [669.5, '5'], [861, '06:00'], [1052.5, '12:00'], [1244, '18:00']];
    for (const [x, label] of times) {
        out += `<path d="M${x} 0V${BASE}" stroke="#181818" stroke-width="2"/>`;
        out += `<text x="${x}" y="854" text-anchor="middle" class="time"${label === '5' ? ' font-weight="700"' : ''}>${label}</text>`;
    }
    for (let p = 3700, y = 24.7; p >= 3000; p -= 100, y += 97.3) {
        out += `<path d="M0 ${y}H${RIGHT}" stroke="#181818" stroke-width="2"/>`;
        out += `<text x="1302" y="${y + 6.5}" class="axis">${p.toLocaleString('en-US')}.00</text>`;
    }
    out += `<path d="M0 723H${RIGHT}" stroke="#181818" stroke-width="2"/>`;
    out += `<rect x="1289" y="713" width="128" height="20" fill="#0e0e0e"/>`;
    out += `<text x="1302" y="731" class="axis">20M</text>`;
    out += `<path d="M0 714H1417" stroke="#2b2b2e" stroke-width="2"/>`;

    candles.forEach(([up, top, bottom, high, low, vol], i) => {
        const x = 93.3 + (i - 12) * 7.99;
        const color = up ? '#5bbe8c' : '#e35d57';
        const h = Math.max(2, vol / 2.46);
        const left = Math.max(0, x - 3.2);
        out += `<rect x="${left}" y="${BASE - h}" width="${x + 3.3 - left}" height="${h}" fill="${up ? '#2f664b' : '#7c3434'}"/>`;
        if (i === 0) return;
        out += `<path d="M${x} ${high / 3 - OFFSET}V${low / 3 - OFFSET}" stroke="${color}" stroke-width="1.5"/>`;
        out += `<rect x="${x - 3.7}" y="${top / 3 - OFFSET}" width="7.400" height="${(bottom - top) / 3}" fill="${color}"/>`;
    });

    // last price
    out += `<path d="M0 421.500H${RIGHT}" stroke="#e35d57" stroke-width="1.500" stroke-dasharray="2 3.900"/>`;
    out += `<path d="M1288 406.500H1401Q1404 406.500 1404 409.500V458Q1404 461 1401 461H1288Z" fill="#e35d57"/>`;
    out += `<text x="1302" y="428" class="axis tag">3,292.72</text><text x="1302" y="452.500" class="axis tag dim">13:59</text>`;
    out += `<path d="M1288 790.500H1396Q1399 790.500 1399 793.500V817.500Q1399 820.500 1396 820.500H1288Z" fill="#e35d57"/>`;
    out += `<text x="1302" y="813" class="axis tag">67.473K</text>`;

    // legends
    out += `<text y="37" class="legend"><tspan x="584" class="red">3,297.32</tspan><tspan x="692">L</tspan><tspan x="707" class="red">3,291.11</tspan><tspan x="816">C</tspan><tspan x="834" class="red">3,292.72</tspan><tspan x="944" class="red">-1.89</tspan><tspan x="1012" class="red">(−0.06%)</tspan></text>`;
    out += `<text y="752" class="legend vol"><tspan x="16">Volume SMA 9</tspan><tspan x="185" class="red">67.473K</tspan></text>`;

    out += `<circle cx="49.600" cy="662" r="29" fill="#171a26" stroke="#4a4a50" stroke-width="2"/>`;
    out += `<path d="M31 653.500H47V673H39.500V661H31ZM58 653.500H69L61 673H52.500Z" fill="#fff"/><circle cx="52.500" cy="657.500" r="3.900" fill="#fff"/>`;
    out += `<path d="M1342.500 847L1348.500 836.500H1360.500L1366.500 847L1360.500 858.500H1348.500Z" fill="none" stroke="#bdbdbd" stroke-width="2"/><circle cx="1354.500" cy="847.500" r="3.800" fill="none" stroke="#bdbdbd" stroke-width="2"/>`;

    document.getElementById('chart').innerHTML = out;
}

renderBook('asks', asks);
renderBook('bids', bids);
renderChart();
```
